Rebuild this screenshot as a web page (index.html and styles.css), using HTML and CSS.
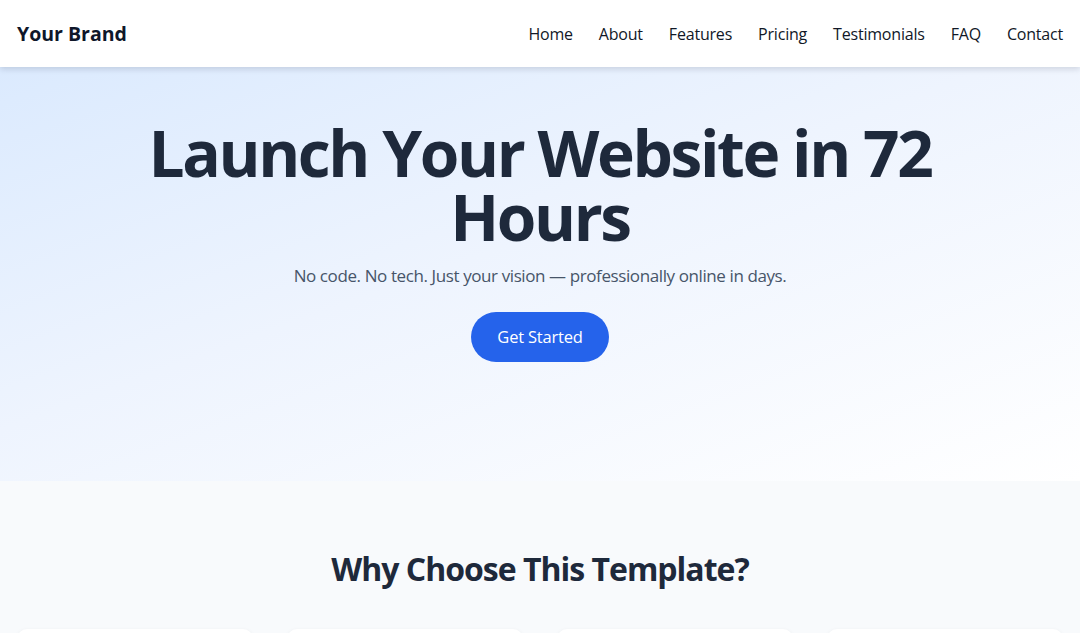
FILE: index.html
```html
<!DOCTYPE html>
<html lang="en">
<head>
<meta charset="utf-8">
<title>Your Brand</title>
<link rel="stylesheet" href="styles.css">
</head>
<body>
<header class="site-header">
  <div class="brand">Your Brand</div>
  <nav class="nav">
    <a href="#">Home</a>
    <a href="#">About</a>
    <a href="#">Features</a>
    <a href="#">Pricing</a>
    <a href="#">Testimonials</a>
    <a href="#">FAQ</a>
    <a href="#">Contact</a>
  </nav>
</header>
<section class="hero">
  <h1 class="hero-title">Launch Your Website in 72 Hours</h1>
  <p class="hero-sub">No code. No tech. Just your vision — professionally online in days.</p>
  <a class="btn" href="#">Get Started</a>
</section>
<section class="features">
  <h2 class="section-title">Why Choose This Template?</h2>
  <div class="cards">
    <div class="card"></div>
    <div class="card"></div>
    <div class="card"></div>
    <div class="card"></div>
  </div>
</section>
</body>
</html>
```
FILE: styles.css
```css
* { box-sizing: border-box; }
html, body { margin: 0; padding: 0; }
body {
  font-family: "Open Sans", "Noto Sans", "Liberation Sans", sans-serif;
  color: #1e293b;
  background: #f8fafc;
  overflow: hidden;
}
.site-header {
  height: 67px;
  display: flex;
  align-items: center;
  justify-content: space-between;
  padding: 0 17px;
  background: #ffffff;
  box-shadow: 0 2px 6px rgba(15, 23, 42, 0.15);
  position: relative;
  z-index: 2;
}
.brand {
  font-size: 19.5px;
  font-weight: 700;
  color: #0f172a;
}
.nav {
  display: flex;
  gap: 26px;
}
.nav a {
  font-size: 16px;
  letter-spacing: -0.2px;
  color: #111827;
  text-decoration: none;
}
.hero {
  background: linear-gradient(160deg, #dbeafe 0%, #eef4fe 45%, #ffffff 100%);
  text-align: center;
  padding: 54px 16px 119px;
}
.hero-title {
  margin: 0 auto;
  max-width: 820px;
  font-size: 64px;
  line-height: 1;
  font-weight: 700;
  letter-spacing: -2.4px;
  color: #1e293b;
}
.hero-sub {
  margin: 13px 0 23px;
  font-size: 17px;
  line-height: 27px;
  letter-spacing: -0.4px;
  color: #475569;
}
.btn {
  display: inline-block;
  background: #2563eb;
  color: #ffffff;
  text-decoration: none;
  font-size: 16.5px;
  line-height: 22px;
  letter-spacing: -0.2px;
  padding: 14px 26px;
  border-radius: 999px;
}
.features {
  background: #f8fafc;
  padding: 68px 17px 40px;
}
.section-title {
  margin: 0 0 40px;
  text-align: center;
  font-size: 32px;
  line-height: 40px;
  font-weight: 700;
  letter-spacing: -1px;
  color: #1e293b;
}
.cards {
  display: grid;
  grid-template-columns: repeat(4, 1fr);
  gap: 34px;
}
.card {
  height: 200px;
  background: #ffffff;
  border-radius: 10px;
  box-shadow: 0 1px 4px rgba(15, 23, 42, 0.06);
}
```
